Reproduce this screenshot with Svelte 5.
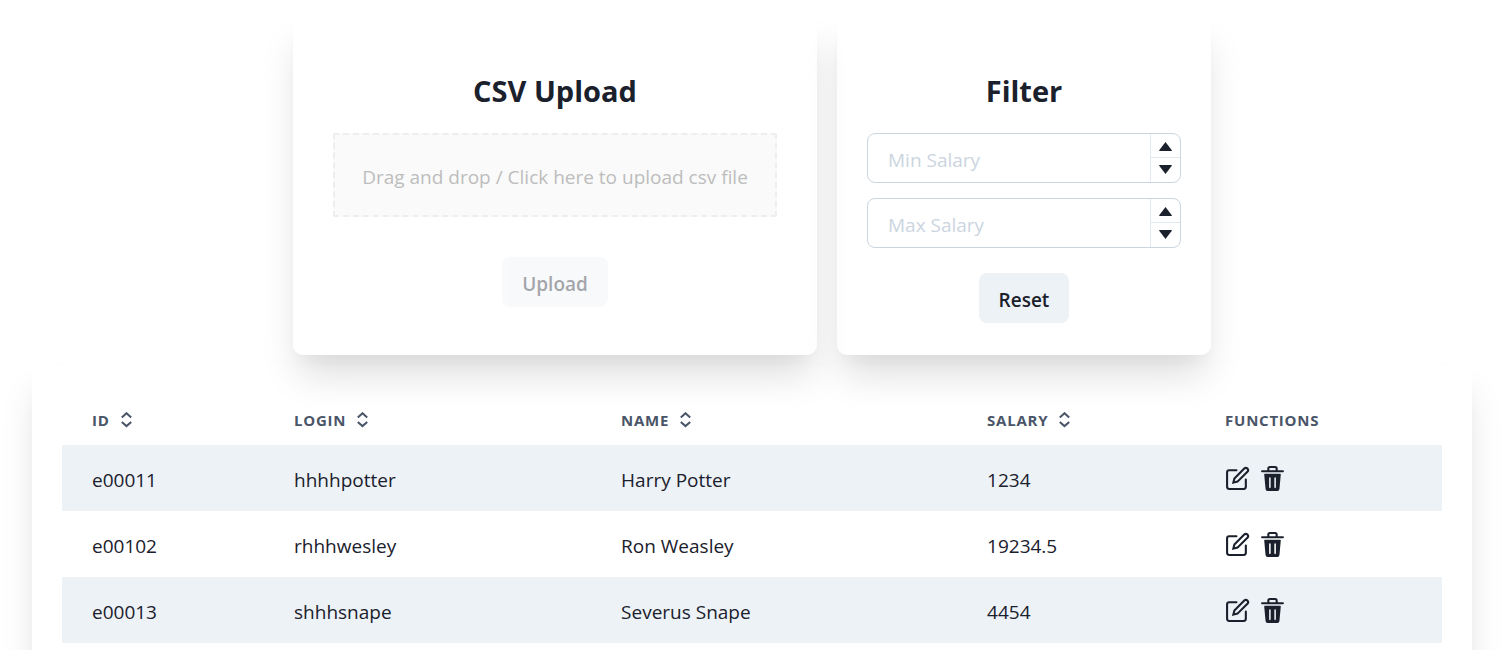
<script>
  let employees = $state([
    { id: 'e00011', login: 'hhhhpotter', name: 'Harry Potter', salary: 1234 },
    { id: 'e00102', login: 'rhhhwesley', name: 'Ron Weasley', salary: 19234.5 },
    { id: 'e00013', login: 'shhhsnape', name: 'Severus Snape', salary: 4454 }
  ]);
  const columns = [
    { key: 'id', label: 'ID' },
    { key: 'login', label: 'Login' },
    { key: 'name', label: 'Name' },
    { key: 'salary', label: 'Salary' }
  ];
  let limits = $state({ min: '', max: '' });
  let files = $state();
  let sort = $state({ key: '', dir: 1 });

  const rows = $derived(
    employees
      .filter((e) => limits.min === '' || e.salary >= Number(limits.min))
      .filter((e) => limits.max === '' || e.salary <= Number(limits.max))
      .toSorted((a, b) => {
        if (!sort.key) return 0;
        return (a[sort.key] > b[sort.key] ? 1 : a[sort.key] < b[sort.key] ? -1 : 0) * sort.dir;
      })
  );

  function step(key, amount) {
    limits[key] = String(Math.max(0, Number(limits[key] || 0) + amount));
  }
  function sortBy(key) {
    sort = { key, dir: sort.key === key ? -sort.dir : 1 };
  }
  function remove(id) {
    employees = employees.filter((e) => e.id !== id);
  }
</script>

{#snippet salaryField(key, label)}
  <div class="number">
    <input type="text" inputmode="decimal" placeholder={label} aria-label={label} bind:value={limits[key]} />
    <div class="stepper">
      <button type="button" aria-label="Increase {label}" onclick={() => step(key, 1)}>
        <svg width="13" height="9" viewBox="0 0 13 9" aria-hidden="true"><path d="M6.5 0 12.8 8.2Q13 9 12.4 9H.6Q0 9 .2 8.2Z" fill="currentColor" /></svg>
      </button>
      <button type="button" aria-label="Decrease {label}" onclick={() => step(key, -1)}>
        <svg width="13" height="9" viewBox="0 0 13 9" aria-hidden="true"><path d="M6.5 9 .2.8Q0 0 .6 0H12.4Q13 0 12.8.8Z" fill="currentColor" /></svg>
      </button>
    </div>
  </div>
{/snippet}

<main>
  <div class="panels">
    <section class="card upload">
      <h2>CSV Upload</h2>
      <label class="dropzone">
        <input type="file" accept=".csv" bind:files />
        Drag and drop / Click here to upload csv file
      </label>
      <button type="button" class="btn" disabled={!files?.length}>Upload</button>
    </section>
    <section class="card filter">
      <h2>Filter</h2>
      <div class="fields">
        {@render salaryField('min', 'Min Salary')}
        {@render salaryField('max', 'Max Salary')}
      </div>
      <button type="button" class="btn" onclick={() => (limits = { min: '', max: '' })}>Reset</button>
    </section>
  </div>

  <section class="card list">
    <table>
      <thead>
        <tr>
          {#each columns as col}
            <th class={col.key} scope="col">
              <button type="button" class="sort" onclick={() => sortBy(col.key)}>
                {col.label}
                <svg width="12" height="16" viewBox="0 0 12 16" aria-hidden="true">
                  <path d="M.8 5.400 5.500 1.200l4.700 4.200M.8 9.900 5.500 14.100l4.700-4.200" fill="none" stroke="currentColor" stroke-width="2" />
                </svg>
              </button>
            </th>
          {/each}
          <th class="functions" scope="col">Functions</th>
        </tr>
      </thead>
      <tbody>
        {#each rows as row (row.id)}
          <tr>
            <td>{row.id}</td>
            <td>{row.login}</td>
            <td>{row.name}</td>
            <td>{row.salary}</td>
            <td class="tools">
              <div class="actions">
                <button type="button" aria-label="Edit {row.name}">
                  <svg width="25" height="25" viewBox="0 0 24 24" aria-hidden="true">
                    <g fill="none" stroke="currentColor" stroke-linecap="round" stroke-width="2">
                      <path d="M11 4H4a2 2 0 0 0-2 2v14a2 2 0 0 0 2 2h14a2 2 0 0 0 2-2v-7" />
                      <path d="M18.5 2.5a2.121 2.121 0 0 1 3 3L12 15l-4 1 1-4 9.500-9.500z" />
                    </g>
                  </svg>
                </button>
                <button type="button" aria-label="Delete {row.name}" onclick={() => remove(row.id)}>
                  <svg width="25" height="25" viewBox="0 0 24 24" aria-hidden="true">
                    <path fill="currentColor" d="M19.452 7.5H4.547a.5.5 0 0 0-.5.545l1.287 14.136A2 2 0 0 0 7.326 24h9.347a2 2 0 0 0 1.992-1.819L19.95 8.045a.5.5 0 0 0-.129-.382.5.5 0 0 0-.369-.163zm-9.2 13a.75.75 0 0 1-1.5 0v-9a.75.75 0 0 1 1.5 0zm5 0a.75.75 0 0 1-1.5 0v-9a.75.75 0 0 1 1.5 0zM22 4h-4.750a.25.25 0 0 1-.25-.25V2.500A2.500 2.500 0 0 0 14.500 0h-5A2.500 2.500 0 0 0 7 2.500v1.250a.25.25 0 0 1-.25.25H2a1 1 0 0 0 0 2h20a1 1 0 0 0 0-2zM9 3.750V2.500a.5.5 0 0 1 .5-.5h5a.5.5 0 0 1 .5.5v1.250a.25.25 0 0 1-.25.25h-5.500A.25.25 0 0 1 9 3.750z" />
                  </svg>
                </button>
              </div>
            </td>
          </tr>
        {/each}
      </tbody>
    </table>
  </section>
</main>

<style>
  :global(body) {
    background: #fff;
  }
  * {
    box-sizing: border-box;
  }
  main {
    display: flex;
    flex-direction: column;
    gap: 10px;
    padding: 15px 32px 0;
    overflow: hidden;
    color: #1a202c;
    font: 19px/30px "Segoe UI", "Open Sans", "Noto Sans", sans-serif;
  }
  button,
  input {
    font: inherit;
    color: inherit;
  }
  button {
    padding: 0;
    border: 0;
    background: none;
    cursor: pointer;
  }
  svg {
    display: block;
  }
  .panels {
    display: flex;
    justify-content: center;
    gap: 20px;
  }
  .card {
    border-radius: 10px;
    box-shadow: 0 25px 37px -5px rgba(0, 0, 0, 0.13), 0 12px 15px -6px rgba(0, 0, 0, 0.03);
  }
  .upload,
  .filter {
    display: flex;
    flex-direction: column;
    align-items: center;
    padding: 56px 40px 32px;
  }
  .upload {
    flex: 0 1 524px;
  }
  .filter {
    flex: 0 1 373px;
    padding-inline: 30px;
  }
  h2 {
    margin: 0 0 22px;
    font-size: 29px;
    line-height: 40px;
    font-weight: 700;
  }
  .dropzone {
    width: 100%;
    margin-bottom: 40px;
    padding: 27px 10px 23px;
    border: 2px dashed #eee;
    border-radius: 2px;
    background: #fafafa;
    color: #bdbdbd;
    text-align: center;
    cursor: pointer;
  }
  .dropzone input {
    display: none;
  }
  .btn {
    height: 50px;
    padding: 3px 20px 0;
    border-radius: 8px;
    background: #edf2f7;
    font-weight: 600;
  }
  .btn:disabled {
    opacity: 0.4;
    cursor: not-allowed;
  }
  .fields {
    display: flex;
    flex-direction: column;
    gap: 15px;
    width: 100%;
    margin-bottom: 25px;
  }
  .number {
    display: flex;
    height: 50px;
    border: 1px solid #cbd5e0;
    border-radius: 8px;
    overflow: hidden;
  }
  .number input {
    flex: 1;
    min-width: 0;
    padding: 4px 20px 0;
    border: 0;
    outline: 0;
    background: none;
  }
  .number input::placeholder {
    color: #cbd5e0;
    opacity: 1;
  }
  .stepper {
    display: grid;
    grid-template-rows: 23px 1fr;
    width: 30px;
    border-left: 1px solid #e2e8f0;
  }
  .stepper button {
    display: flex;
    align-items: center;
    justify-content: center;
  }
  .stepper button:first-child {
    padding-top: 2px;
  }
  .stepper button + button {
    padding-bottom: 2px;
    border-top: 1px solid #e2e8f0;
  }
  .list {
    padding: 30px;
  }
  table {
    width: 100%;
    table-layout: fixed;
    border-collapse: collapse;
  }
  th {
    height: 50px;
    padding: 0 30px;
    color: #4a5568;
    font-size: 15px;
    line-height: 20px;
    font-weight: 700;
    letter-spacing: 0.05em;
    text-align: left;
    text-transform: uppercase;
  }
  .id {
    width: 14.64%;
  }
  .login {
    width: 23.7%;
  }
  .name {
    width: 26.52%;
  }
  .salary {
    width: 17.25%;
  }
  .sort {
    display: flex;
    align-items: center;
    gap: 11px;
    letter-spacing: inherit;
    text-transform: inherit;
  }
  td {
    height: 66px;
    padding: 3px 30px 0;
  }
  .tools {
    padding-top: 1px;
  }
  tbody tr:nth-child(odd) {
    background: #edf2f7;
  }
  .actions {
    display: flex;
    gap: 10px;
  }
</style>
